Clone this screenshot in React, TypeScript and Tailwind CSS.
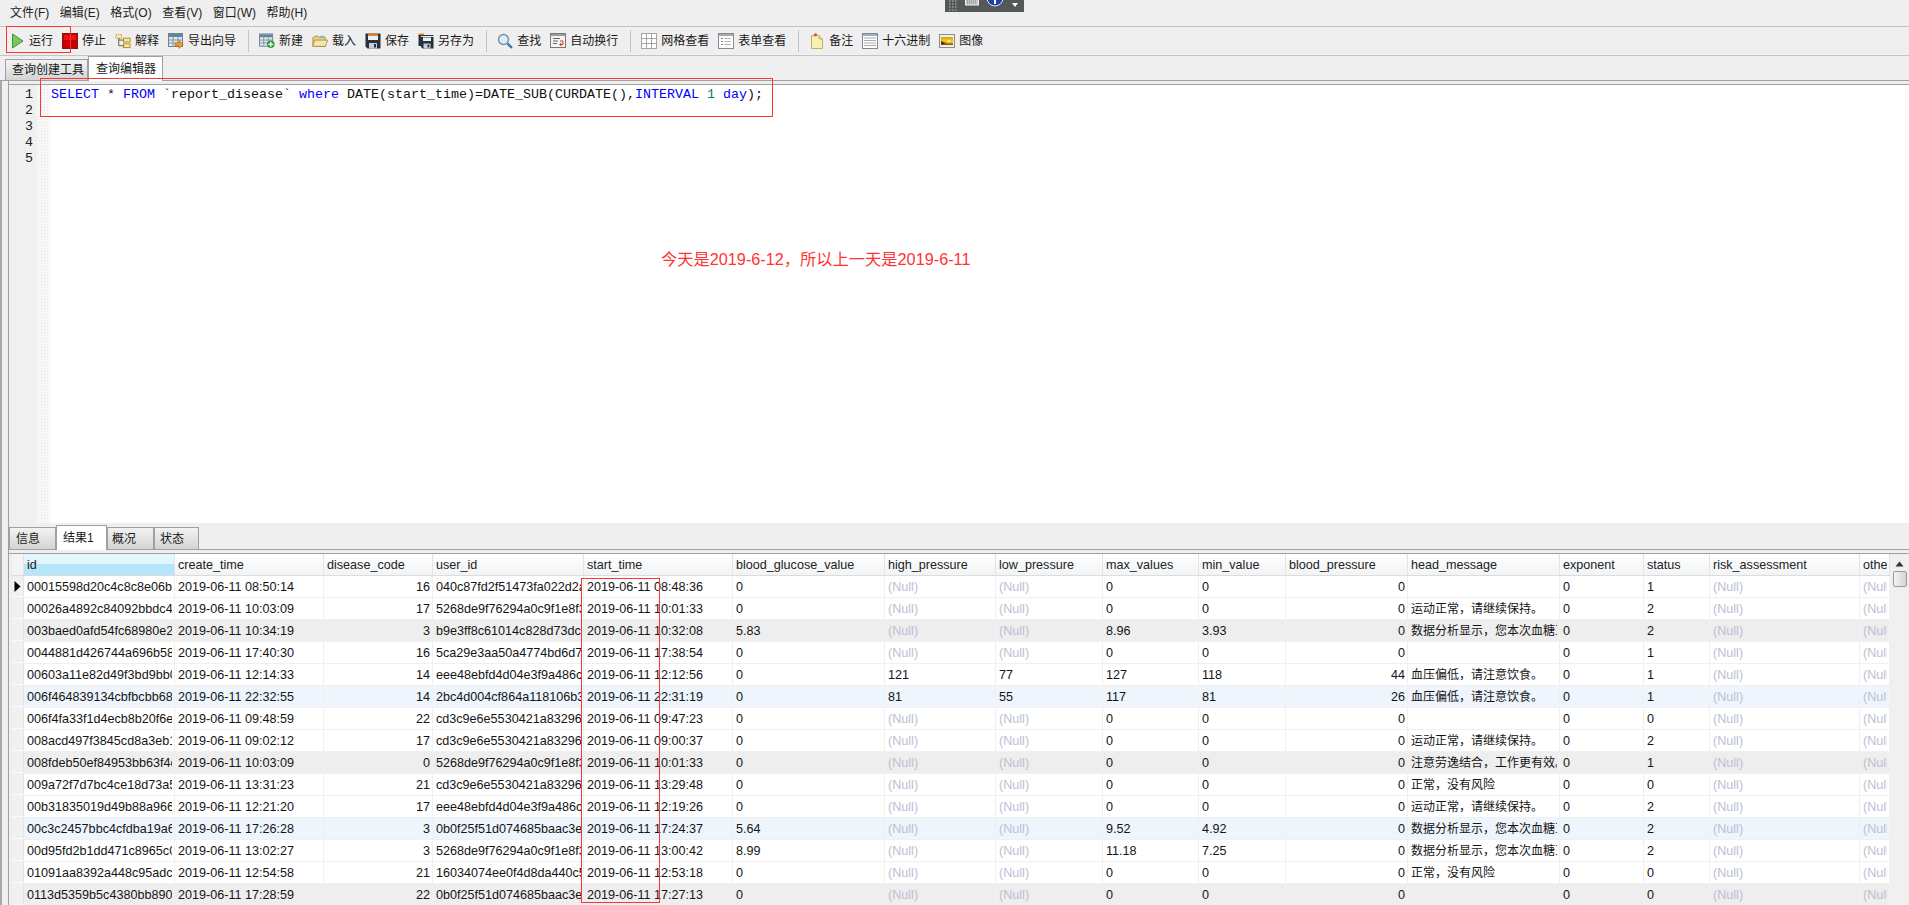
const cjk = "font-['Liberation_Sans','Noto_Sans_CJK_SC',sans-serif]"

const PlayIcon = () => (
    <svg width="16" height="16" viewBox="0 0 16 16">
        <path d="M3.5 1 L14 8 L3.5 15 Z" fill="#7cc85a" stroke="#3f8f45" />
    </svg>
)

const StopIcon = () => (
    <svg width="16" height="16" viewBox="0 0 16 16">
        <rect x="0.5" y="0.5" width="15" height="15" fill="#c80000" stroke="#7a1a1a" />
        <rect x="2" y="2" width="12" height="5" fill="#ee1010" />
    </svg>
)

const ExplainIcon = () => (
    <svg width="17" height="16" viewBox="0 0 17 16" fill="none">
        <rect x="1" y="1" width="6" height="4" fill="#fbe9a0" stroke="#a88a20" strokeDasharray="1 1" />
        <rect x="9" y="5" width="7" height="4" fill="#fbe9a0" stroke="#a88a20" />
        <rect x="9" y="11" width="7" height="4" fill="#fbe9a0" stroke="#a88a20" />
        <path d="M4 5 V13 H9 M4 7 H9" stroke="#555" />
    </svg>
)

const TableBase = () => (
    <>
        <rect x="0.5" y="0.5" width="14" height="13" fill="#dfe8ee" stroke="#6f8490" />
        <rect x="1" y="1" width="13" height="3" fill="#5f8798" />
        <path d="M5 4 V13 M10 4 V13 M1 7 H14 M1 10 H14" stroke="#7d98a6" />
    </>
)

const ExportIcon = () => (
    <svg width="16" height="16" viewBox="0 0 16 16">
        <TableBase />
        <path d="M7 10 H11 V7.5 L15.5 11.5 L11 15.5 V13 H7 Z" fill="#ef9a2a" stroke="#b96a10" strokeWidth="0.6" />
    </svg>
)

const NewIcon = () => (
    <svg width="17" height="16" viewBox="0 0 17 16">
        <TableBase />
        <circle cx="12.5" cy="11.5" r="4" fill="#2f9e44" />
        <path d="M12.5 9 V14 M10 11.5 H15" stroke="#fff" strokeWidth="1.4" />
    </svg>
)

const FolderIcon = () => (
    <svg width="18" height="16" viewBox="0 0 18 16">
        <path d="M1 14 V4 H2 L3 2.5 H7 L8 4 H15 V14 Z" fill="#e8cf85" stroke="#a98f45" />
        <path d="M1 14 L3 7 H17.5 L15 14 Z" fill="#f6e6ad" stroke="#a98f45" />
        <path d="M9 2 H14 V4 H9 Z" fill="#7cc4ec" />
    </svg>
)

const SaveIcon = () => (
    <svg width="16" height="16" viewBox="0 0 16 16">
        <path d="M0.5 0.5 H15.5 V15.5 H2.5 L0.5 13.5 Z" fill="#26323d" />
        <rect x="3" y="1" width="10" height="2" fill="#ef7f1a" />
        <rect x="3" y="3" width="10" height="4" fill="#eef1f4" />
        <rect x="4" y="10" width="8" height="5.5" fill="#c8ced4" />
        <rect x="9" y="11" width="2" height="3.5" fill="#26323d" />
    </svg>
)

const SaveAsIcon = () => (
    <svg width="16" height="16" viewBox="0 0 16 16">
        <path d="M0.5 0.5 H6 V3 H0.5 Z" fill="#ef7f1a" />
        <path d="M0.5 2 V13 H3 V3 H15.5 V2 Z" fill="#26323d" />
        <path d="M3 4 H15.5 V15.5 H4.5 L3 14 Z" fill="#26323d" />
        <rect x="5" y="4.5" width="8" height="3.5" fill="#eef1f4" />
        <rect x="5.5" y="10.5" width="7" height="5" fill="#c8ced4" />
        <rect x="9.5" y="11.5" width="1.8" height="3" fill="#26323d" />
    </svg>
)

const SearchIcon = () => (
    <svg width="16" height="16" viewBox="0 0 16 16" fill="none">
        <circle cx="6.5" cy="6.5" r="5" fill="#dcecf8" stroke="#7d8ea0" strokeWidth="1.4" />
        <path d="M10.5 10.5 L15 15" stroke="#3f6f9f" strokeWidth="2.4" />
    </svg>
)

const WrapIcon = () => (
    <svg width="16" height="16" viewBox="0 0 16 16" fill="none">
        <rect x="0.5" y="0.5" width="15" height="14" fill="#f4f4f4" stroke="#77797c" />
        <rect x="1" y="1" width="14" height="2" fill="#9a9ea3" />
        <path d="M3 5.5 H10 M3 8 H8 M3 10.5 H7" stroke="#666" />
        <path d="M10 8 H13 V11.5 H10 M11.5 10 L9.5 11.5 L11.5 13" stroke="#d2401c" />
    </svg>
)

const GridIcon = () => (
    <svg width="16" height="16" viewBox="0 0 16 16" fill="none">
        <rect x="0.5" y="0.5" width="15" height="15" fill="#fff" stroke="#a4a4a4" />
        <path d="M5.5 1 V15 M10.5 1 V15 M1 5.5 H15 M1 10.5 H15" stroke="#a4a4a4" />
    </svg>
)

const FormIcon = () => (
    <svg width="16" height="16" viewBox="0 0 16 16" fill="none">
        <rect x="0.5" y="0.5" width="15" height="15" fill="#fff" stroke="#88898b" />
        <rect x="1" y="1" width="14" height="2" fill="#a9abae" />
        <path d="M3 5.5 H5 M3 8.5 H5 M3 11.5 H5" stroke="#888" />
        <path d="M6.5 5.5 H13 M6.5 8.5 H13 M6.5 11.5 H13" stroke="#b4b4b4" />
    </svg>
)

const NoteIcon = () => (
    <svg width="12" height="16" viewBox="0 0 12 16">
        <path d="M0.5 2.5 H8 L11.5 6 V15.5 H0.5 Z" fill="#f8f0b0" stroke="#bcb265" />
        <path d="M8 2.5 V6 H11.5" fill="#e8dd90" stroke="#bcb265" />
        <circle cx="4.5" cy="1.8" r="1.6" fill="#e0484c" />
    </svg>
)

const HexIcon = () => (
    <svg width="16" height="16" viewBox="0 0 16 16">
        <rect x="0.5" y="0.5" width="15" height="15" fill="#fff" stroke="#85878a" />
        <rect x="1" y="1" width="14" height="2" fill="#9ab0c4" />
        <path d="M2.5 5 H14 M2.5 7.5 H14 M2.5 10 H14 M2.5 12.5 H14" stroke="#555" strokeDasharray="1 1" />
    </svg>
)

const ImageIcon = () => (
    <svg width="16" height="14" viewBox="0 0 16 14">
        <defs>
            <linearGradient id="sunset" x1="0" y1="0" x2="0" y2="1">
                <stop offset="0" stopColor="#d8a808" />
                <stop offset="0.6" stopColor="#f4d020" />
                <stop offset="1" stopColor="#7a4208" />
            </linearGradient>
        </defs>
        <rect x="0.5" y="0.5" width="15" height="13" fill="#eee" stroke="#8c8c8c" />
        <rect x="2" y="3" width="12" height="8" fill="url(#sunset)" />
        <path d="M2 7 L7 9 L2 11 Z" fill="#6a2a10" />
        <circle cx="10" cy="7" r="1.5" fill="#fff27a" />
    </svg>
)

const menus = ["文件(F)", "编辑(E)", "格式(O)", "查看(V)", "窗口(W)", "帮助(H)"]

const toolGroups = [
    [
        { label: "运行", icon: <PlayIcon /> },
        { label: "停止", icon: <StopIcon /> },
        { label: "解释", icon: <ExplainIcon /> },
        { label: "导出向导", icon: <ExportIcon /> },
    ],
    [
        { label: "新建", icon: <NewIcon /> },
        { label: "载入", icon: <FolderIcon /> },
        { label: "保存", icon: <SaveIcon /> },
        { label: "另存为", icon: <SaveAsIcon /> },
    ],
    [
        { label: "查找", icon: <SearchIcon /> },
        { label: "自动换行", icon: <WrapIcon /> },
    ],
    [
        { label: "网格查看", icon: <GridIcon /> },
        { label: "表单查看", icon: <FormIcon /> },
    ],
    [
        { label: "备注", icon: <NoteIcon /> },
        { label: "十六进制", icon: <HexIcon /> },
        { label: "图像", icon: <ImageIcon /> },
    ],
]

const gridCols = "grid grid-cols-[12px_151px_149px_109px_151px_149px_152px_111px_107px_96px_87px_122px_152px_84px_66px_150px_30px]"

const headers = ["id", "create_time", "disease_code", "user_id", "start_time", "blood_glucose_value", "high_pressure", "low_pressure", "max_values", "min_value", "blood_pressure", "head_message", "exponent", "status", "risk_assessment", "other"]

const sport = "运动正常，请继续保持。"
const data = "数据分析显示，您本次血糖正常"
const low = "血压偏低，请注意饮食。"
const rest = "注意劳逸结合，工作更有效。"
const fine = "正常，没有风险"

type Row = [string, string, string, string, string, string, string | null, string | null, string, string, string, string, string]

const rows: Row[] = [
    ["00015598d20c4c8c8e06b91", "08:50:14", "16", "040c87fd2f51473fa022d2a", "08:48:36", "0", null, null, "0", "0", "0", "", "1"],
    ["00026a4892c84092bbdc4a1", "10:03:09", "17", "5268de9f76294a0c9f1e8f3", "10:01:33", "0", null, null, "0", "0", "0", sport, "2"],
    ["003baed0afd54fc68980e2c", "10:34:19", "3", "b9e3ff8c61014c828d73dc1", "10:32:08", "5.83", null, null, "8.96", "3.93", "0", data, "2"],
    ["0044881d426744a696b58f2", "17:40:30", "16", "5ca29e3aa50a4774bd6d7e1", "17:38:54", "0", null, null, "0", "0", "0", "", "1"],
    ["00603a11e82d49f3bd9bb01", "12:14:33", "14", "eee48ebfd4d04e3f9a486c2", "12:12:56", "0", "121", "77", "127", "118", "44", low, "1"],
    ["006f464839134cbfbcbb68a", "22:32:55", "14", "2bc4d004cf864a118106b3d", "22:31:19", "0", "81", "55", "117", "81", "26", low, "1"],
    ["006f4fa33f1d4ecb8b20f6e", "09:48:59", "22", "cd3c9e6e5530421a83296f1", "09:47:23", "0", null, null, "0", "0", "0", "", "0"],
    ["008acd497f3845cd8a3eb17", "09:02:12", "17", "cd3c9e6e5530421a83296f1", "09:00:37", "0", null, null, "0", "0", "0", sport, "2"],
    ["008fdeb50ef84953bb63f4c", "10:03:09", "0", "5268de9f76294a0c9f1e8f3", "10:01:33", "0", null, null, "0", "0", "0", rest, "1"],
    ["009a72f7d7bc4ce18d73a52", "13:31:23", "21", "cd3c9e6e5530421a83296f1", "13:29:48", "0", null, null, "0", "0", "0", fine, "0"],
    ["00b31835019d49b88a966d1", "12:21:20", "17", "eee48ebfd4d04e3f9a486c2", "12:19:26", "0", null, null, "0", "0", "0", sport, "2"],
    ["00c3c2457bbc4cfdba19a6e", "17:26:28", "3", "0b0f25f51d074685baac3e1", "17:24:37", "5.64", null, null, "9.52", "4.92", "0", data, "2"],
    ["00d95fd2b1dd471c8965c0a", "13:02:27", "3", "5268de9f76294a0c9f1e8f3", "13:00:42", "8.99", null, null, "11.18", "7.25", "0", data, "2"],
    ["01091aa8392a448c95adc3f", "12:54:58", "21", "16034074ee0f4d8da440c5b", "12:53:18", "0", null, null, "0", "0", "0", fine, "0"],
    ["0113d5359b5c4380bb890e4", "17:28:59", "22", "0b0f25f51d074685baac3e1", "17:27:13", "0", null, null, "0", "0", "0", "", "0"],
]

function rowBg(index: number) {
    if (index % 6 === 2) return "bg-[#eeeeee]"
    if (index % 6 === 5) return "bg-[#eef5fc]"
    return "bg-white"
}

const Cell = ({ value, right, small }: { value: string | null, right?: boolean, small?: boolean }) => (
    <div className="border-r border-[#f0f0f0] pl-[3px] pr-[2px] min-w-0">
        <div className={`h-[21px] overflow-hidden whitespace-nowrap leading-[23px] ${right ? "text-right" : ""} ${small ? "text-[12px]" : ""} ${value === null ? "text-[#bcc0d2]" : "text-[#141414]"}`}>
            {value === null ? "(Null)" : value}
        </div>
    </div>
)

const Tab = ({ label, active, className }: { label: string, active?: boolean, className: string }) => (
    <div className={`flex items-center border border-[#a0a0a0] ${active ? "bg-white border-b-0" : "bg-gradient-to-b from-[#f2f2f2] to-[#d4d4d4]"} ${className}`}>
        {label}
    </div>
)

export default function App() {
    return (
        <div className={`relative w-[1909px] h-[905px] overflow-hidden bg-[#efefef] text-[12px] text-[#1a1a1a] ${cjk}`}>
            {/* menu bar */}
            <div className="h-[26px] flex items-center gap-[10.5px] pl-[10px] text-[#222]">
                {menus.map(m => <span key={m}>{m}</span>)}
            </div>

            {/* toolbar */}
            <div className="h-[30px] flex items-center pl-[9px] border-t border-b border-[#c4c4c4]">
                {toolGroups.map((group, i) => (
                    <div key={i} className="flex items-center">
                        {i > 0 && <div className="w-[1px] h-[22px] bg-[#c4c4c4] ml-[12px] mr-[10px]"></div>}
                        <div className="flex items-center gap-[9px]">
                            {group.map(tool => (
                                <div key={tool.label} className="flex items-center gap-[4px]">
                                    <div className="w-[16px] h-[16px] flex items-center justify-center">{tool.icon}</div>
                                    <span>{tool.label}</span>
                                </div>
                            ))}
                        </div>
                    </div>
                ))}
            </div>

            {/* query tabs */}
            <div className="h-[25px] flex items-end pl-[5px] border-b border-[#a0a0a0]">
                <Tab label="查询创建工具" className="w-[83px] h-[21px] border-b-0 pl-[6px]" />
                <Tab label="查询编辑器" active className="w-[75px] h-[25px] -mb-[1px] pl-[7px]" />
            </div>

            <div className="border-l-2 border-[#a8a8a8] pl-[6px]">
                <div className="border-l border-[#a0a0a0]">
                    <div className="h-[4px] border-b border-[#a0a0a0]"></div>

                    {/* sql editor */}
                    <div className="h-[438px] flex bg-white font-['Liberation_Mono',monospace] text-[13.33px] leading-[16px]">
                        <div className="w-[28px] bg-[#f0f0f0] pt-[2px] pr-[4px] text-right text-[#222]">
                            {[1, 2, 3, 4, 5].map(n => <div key={n}>{n}</div>)}
                        </div>
                        <div className="w-[13px] bg-[#f8f8f8] bg-[radial-gradient(#e4e4e4_1px,transparent_1px)] bg-[length:3px_3px]"></div>
                        <div className="pt-[2px] pl-[1px] whitespace-pre text-[#111]">
                            <span className="text-[#0000ff]">SELECT</span> * <span className="text-[#0000ff]">FROM</span> `report_disease` <span className="text-[#0000ff]">where</span> DATE(start_time)=DATE_SUB(CURDATE(),<span className="text-[#0000ff]">INTERVAL</span> <span className="text-[#007f7f]">1</span> <span className="text-[#0000ff]">day</span>);
                        </div>
                    </div>

                    {/* result tabs */}
                    <div className="h-[27px] flex items-end border-b border-[#a0a0a0]">
                        <Tab label="信息" className="w-[47px] h-[22px] border-b-0 pl-[6px]" />
                        <Tab label="结果1" active className="w-[51px] h-[25px] -mb-[1px] pl-[6px]" />
                        <Tab label="概况" className="w-[47px] h-[22px] border-b-0 pl-[4px]" />
                        <Tab label="状态" className="w-[45px] h-[22px] border-b-0 pl-[5px]" />
                    </div>
                    <div className="h-[4px] border-b border-[#a0a0a0]"></div>

                    {/* result grid */}
                    <div className="flex pl-[3px]">
                        <div className="w-[1878px] text-[12.6px]">
                            <div className={`${gridCols} h-[22px] bg-gradient-to-b from-white to-[#f1f3f5] border-b border-[#dcdcdc]`}>
                                <div className="bg-[#f4f4f4] border-r border-[#e4e4e4]"></div>
                                {headers.map((h, i) => (
                                    <div key={h} className={`border-r border-[#e4e4e4] pl-[3px] pr-[2px] min-w-0 ${i === 0 ? "bg-[linear-gradient(#e3f6fe_50%,#b5e6fb_50%)]" : ""}`}>
                                        <div className="h-[21px] leading-[23px] overflow-hidden whitespace-nowrap text-[#222]">{h}</div>
                                    </div>
                                ))}
                            </div>
                            {rows.map((row, i) => (
                                <div key={row[0]} className={`${gridCols} h-[22px] border-b border-[#f0f0f0] ${rowBg(i)}`}>
                                    <div className="bg-[#f0f0f0] border-r border-[#e4e4e4] border-b border-b-[#fafafa] flex items-center justify-center">
                                        {i === 0 && <svg width="7" height="11" viewBox="0 0 7 11"><path d="M0.5 0 L6.5 5.5 L0.5 11 Z" fill="#000" /></svg>}
                                    </div>
                                    <Cell value={row[0]} />
                                    <Cell value={`2019-06-11 ${row[1]}`} />
                                    <Cell value={row[2]} right />
                                    <Cell value={row[3]} />
                                    <Cell value={`2019-06-11 ${row[4]}`} />
                                    <Cell value={row[5]} />
                                    <Cell value={row[6]} />
                                    <Cell value={row[7]} />
                                    <Cell value={row[8]} />
                                    <Cell value={row[9]} />
                                    <Cell value={row[10]} right />
                                    <Cell value={row[11]} small />
                                    <Cell value="0" />
                                    <Cell value={row[12]} />
                                    <Cell value={null} />
                                    <Cell value={null} />
                                </div>
                            ))}
                        </div>
                        {/* scrollbar */}
                        <div className="w-[19px] bg-[#f0f0f0] flex flex-col items-center">
                            <svg className="mt-[7px]" width="9" height="6" viewBox="0 0 9 6"><path d="M4.5 0.5 L8.5 5.5 H0.5 Z" fill="#333" /></svg>
                            <div className="mt-[4px] w-[14px] h-[16px] border border-[#9a9a9a] rounded-[2px] bg-gradient-to-r from-[#f4f4f4] to-[#d4d4d4]"></div>
                        </div>
                    </div>
                </div>
            </div>

            {/* remote control bar that sits over the window */}
            <div className="absolute left-[945px] top-0 w-[79px] h-[12px] bg-[#555858] overflow-hidden">
                <svg width="79" height="12" viewBox="0 0 79 12">
                    <path d="M4 1 H12 M4 4 H12 M4 7 H12 M4 10 H12" stroke="#bbb" strokeDasharray="1.5 1.5" />
                    <rect x="20.5" y="-5" width="13" height="10" fill="#c8c8c8" stroke="#eee" />
                    <path d="M22 1 H32 M22 3 H32" stroke="#777" strokeDasharray="1 1" />
                    <circle cx="50" cy="-2" r="8" fill="#1c3fb4" stroke="#dfe6f5" />
                    <rect x="49" y="0" width="2" height="4" fill="#fff" />
                    <path d="M67 3 H73 L70 7 Z" fill="#fff" />
                </svg>
            </div>

            {/* red annotations drawn on the screenshot */}
            <div className="absolute left-[6px] top-[26px] w-[65px] h-[27px] border border-[#ff3333]"></div>
            <div className="absolute left-[40px] top-[78px] w-[733px] h-[39px] border border-[#ff3333]"></div>
            <div className="absolute left-[581px] top-[578px] w-[79px] h-[325px] border border-[#ff3333]"></div>
            <div className="absolute left-[661px] top-[249px] text-[16.25px] leading-[20px] text-[#ff3333] whitespace-nowrap">今天是2019-6-12，所以上一天是2019-6-11</div>
        </div>
    )
}
